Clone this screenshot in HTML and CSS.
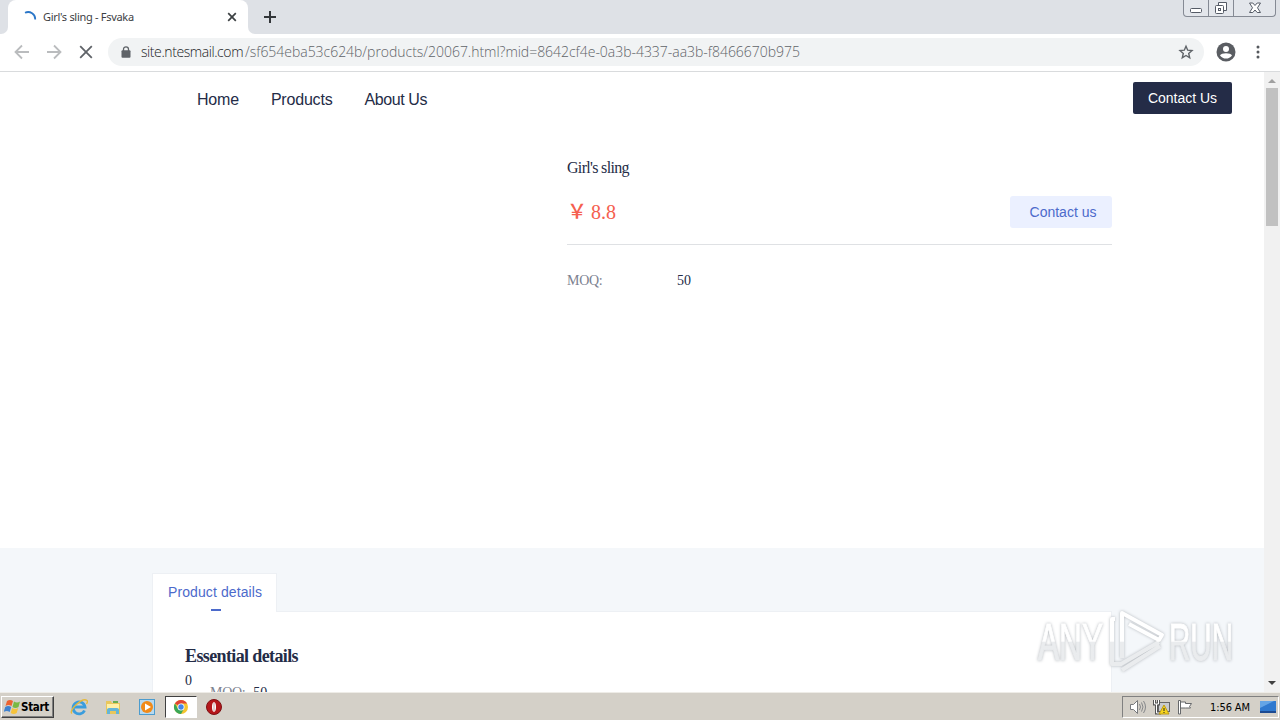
FILE: index.html
```html
<!DOCTYPE html>
<html lang="en">
<head>
  <meta charset="UTF-8">
  <meta name="viewport" content="width=device-width, initial-scale=1.0">
  <title>Girl's sling - Fsvaka</title>
  <link rel="stylesheet" href="styles.css">
</head>
<body>
  <div class="tab-strip">
    <div class="strip-edge"></div>
    <div class="tab">
      <svg class="spinner" width="16" height="16" viewBox="0 0 16 16"><path d="M3 1.700C8-.5 13.500 3 13.200 8.500" fill="none" stroke="#2a76c8" stroke-width="1.800"/></svg>
      <span class="tab-title">Girl's sling - Fsvaka</span>
      <svg class="tab-close" width="10" height="10" viewBox="0 0 10 10"><path d="M1.200 1.200l7.600 7.600M8.800 1.200L1.200 8.800" stroke="#3c4043" stroke-width="1.700"/></svg>
    </div>
    <div class="strip-rest">
      <svg class="new-tab" width="12" height="12" viewBox="0 0 12 12"><path d="M6 0v12M0 6h12" stroke="#33363a" stroke-width="2"/></svg>
      <div class="window-buttons">
        <div class="win-btn"><svg width="14" height="16" viewBox="0 0 14 16"><rect x="1.500" y="8.500" width="11" height="4" rx="1" fill="#fff" stroke="#555b66"/></svg></div>
        <div class="win-btn"><svg width="14" height="16" viewBox="0 0 14 16"><path d="M4.500 5V2.500h8v8H10" fill="#fff" stroke="#555b66"/><rect x="1.500" y="5.500" width="8" height="8" rx="1" fill="#fff" stroke="#555b66"/><rect x="4.500" y="8.500" width="2" height="2" fill="none" stroke="#555b66"/></svg></div>
        <div class="win-btn win-close"><svg width="14" height="16" viewBox="0 0 14 16"><path d="M1.500 3h3.300L7 5.500 9.200 3h3.300L9.500 7.800l3 4.700H9.200L7 10l-2.200 2.500H1.500l3-4.700z" fill="#fff" stroke="#555b66"/></svg></div>
      </div>
    </div>
  </div>

  <div class="toolbar">
    <svg width="16" height="16" viewBox="0 0 16 16"><path d="M15 8H2M8 1.500L1.500 8 8 14.500" fill="none" stroke="#babcbe" stroke-width="1.800"/></svg>
    <svg width="16" height="16" viewBox="0 0 16 16"><path d="M1 8h13M8 1.500L14.500 8 8 14.500" fill="none" stroke="#babcbe" stroke-width="1.800"/></svg>
    <svg width="16" height="16" viewBox="0 0 16 16"><path d="M2.200 2.200l11.600 11.600M13.800 2.200L2.200 13.800" stroke="#5f6368" stroke-width="1.800"/></svg>
    <div class="address-bar">
      <svg class="lock" width="10" height="12" viewBox="0 0 10 12"><path d="M2.500 5V3.300a2.500 2.500 0 0 1 5 0V5" fill="none" stroke="#5f6368" stroke-width="1.300"/><rect x=".5" y="4.300" width="9" height="7.400" rx="1" fill="#5f6368"/></svg>
      <span class="url"><span class="host">site.ntesmail.com</span><span class="path">/sf654eba53c624b/products/20067.html?mid=8642cf4e-0a3b-4337-aa3b-f8466670b975</span></span>
      <svg class="star" width="16" height="16" viewBox="0 0 16 16"><path d="M8 2.200l1.700 4 4.300.4-3.300 2.900 1 4.300L8 11.500l-3.700 2.300 1-4.300L2 6.600l4.300-.4z" fill="none" stroke="#5f6368" stroke-width="1.400"/></svg>
    </div>
    <svg class="avatar" width="20" height="20" viewBox="0 0 20 20"><circle cx="10" cy="10" r="9.500" fill="#5a5d62"/><circle cx="10" cy="7" r="3" fill="#fff"/><path d="M4 13.500c1.200-3.100 10.800-3.100 12 0-2.800 4.100-9.200 4.100-12 0z" fill="#fff"/></svg>
    <svg class="menu" width="4" height="16" viewBox="0 0 4 16"><g fill="#55585d"><circle cx="2" cy="3" r="1.500"/><circle cx="2" cy="8" r="1.500"/><circle cx="2" cy="13" r="1.500"/></g></svg>
  </div>

  <div class="viewport">
    <div class="page">
      <header class="header">
        <nav class="nav">
          <a>Home</a>
          <a>Products</a>
          <a>About Us</a>
        </nav>
        <button class="header-contact">Contact Us</button>
      </header>
      <section class="product">
        <div class="product-info">
          <h1>Girl's sling</h1>
          <div class="price-row">
            <span class="price"><span class="yen">￥</span>8.8</span>
            <button class="product-contact">Contact us</button>
          </div>
          <div class="attr">
            <span class="attr-name">MOQ:</span>
            <span class="attr-value">50</span>
          </div>
        </div>
      </section>
      <section class="details">
        <div class="details-tab">Product details</div>
        <div class="details-body">
          <h2>Essential details</h2>
          <div class="zero">0</div>
          <div class="detail-attr"><span class="attr-name">MOQ:</span><span>50</span></div>
        </div>
      </section>
    </div>
    <div class="scrollbar">
      <svg width="16" height="16" viewBox="0 0 16 16"><path d="M4 11l4-4 4 4z" fill="#a0a0a0"/></svg>
      <div class="thumb"></div>
      <svg class="scroll-down" width="16" height="16" viewBox="0 0 16 16"><path d="M4 5l4 4 4-4z" fill="#404040"/></svg>
    </div>
    <svg class="watermark" width="210" height="76" viewBox="0 0 210 76">
      <defs>
        <linearGradient id="fade" gradientUnits="userSpaceOnUse" x1="0" y1="0" x2="0" y2="72">
          <stop offset=".49" stop-color="#fff"/>
          <stop offset=".5" stop-color="#eaecee"/>
        </linearGradient>
      </defs>
      <g class="mark">
        <text x="7" y="54" textLength="65" lengthAdjust="spacingAndGlyphs">ANY</text>
        <path d="M84 13h-3v45h9l38-22M91 52V7l40 22-3 5-30-16M91 64l38-24" fill="none" stroke="url(#fade)" stroke-width="4" stroke-linejoin="round"/>
        <text x="138" y="54" textLength="64" lengthAdjust="spacingAndGlyphs">RUN</text>
      </g>
    </svg>
  </div>

  <div class="taskbar">
    <div class="start">
      <svg width="17" height="16" viewBox="0 0 17 16"><path d="M3 2q3-2 6 0L7.500 7q-3-2-6 0z" fill="#ed6330"/><path d="M10 2.500q3 2 6 0L14.500 8q-3 2-6 0z" fill="#79b943"/><path d="M1.200 8q3-2 6 0l-1.500 5q-3-2-6 0z" fill="#3f82cf"/><path d="M8.200 9q3 2 6 0l-1.500 5q-3 2-6 0z" fill="#f6c33b"/></svg>
      <span>Start</span>
    </div>
    <div class="launch">
      <svg width="18" height="18" viewBox="0 0 18 18"><path d="M14.500 12.500A6 6 0 1 1 15 9H4" fill="none" stroke="#3a9ddd" stroke-width="2.800"/><path d="M2 15.500C-2 13 12-1 17 2.500q1 1-.5 3.500" fill="none" stroke="#e5b93c" stroke-width="1.400"/></svg>
      <svg width="18" height="18" viewBox="0 0 18 18"><path d="M2 3h5l1 2h8v11H2z" fill="#e9c75c"/><path d="M3 6h12v5H3z" fill="#fff0a7"/><path d="M3 16v-4q0-2 2-2h8q2 0 2 2v4h-3v-3H6v3z" fill="#64b5d8"/><path d="M9 3h5v2H9z" fill="#69ad52"/></svg>
      <svg width="18" height="18" viewBox="0 0 18 18"><rect x="1.500" y="1.500" width="15" height="15" fill="#b7d9ef" stroke="#4c9cce"/><circle cx="9" cy="9" r="6" fill="#f18a18"/><path d="M7 5.500l6 3.500-6 3.500z" fill="#fff"/></svg>
    </div>
    <div class="active-app">
      <svg width="16" height="16" viewBox="0 0 16 16"><circle cx="8" cy="8" r="7" fill="#f4c42f"/><path d="M8 8L1.900 4.500A7 7 0 0 1 14.100 4.500H8z" fill="#e04435"/><path d="M1.900 4.500A7 7 0 0 0 8 15l3-5.300L8 8 5 9.700z" fill="#3aa757"/><circle cx="8" cy="8" r="3.500" fill="#fff"/><circle cx="8" cy="8" r="2.700" fill="#4285e8"/></svg>
    </div>
    <svg class="opera" width="16" height="16" viewBox="0 0 16 16"><circle cx="8" cy="8" r="7.500" fill="#b5171b"/><circle cx="8" cy="8" r="7.500" fill="none" stroke="#7d1014"/><ellipse cx="8" cy="8" rx="2" ry="4.800" fill="#fff"/><path d="M8 4v8" stroke="#c9a0a0"/></svg>
    <div class="tray">
      <svg width="18" height="16" viewBox="0 0 18 16"><path d="M1.500 5.500h3l4-4v13l-4-4h-3z" fill="#fff" stroke="#77797c"/><path d="M10.500 5q2 3 0 6M12.500 3.500q3 4.500 0 9M14.500 2q4 6 0 12" fill="none" stroke="#85878a"/></svg>
      <svg width="18" height="16" viewBox="0 0 18 16"><rect x="5.500" y="3.500" width="11" height="9" fill="#c8cacd" stroke="#666"/><path d="M1.500 1v4h4V1M3.500 5v9H8" fill="none" stroke="#555" stroke-width="3"/><path d="M1.500 1v4h4V1M3.500 5v9H8" fill="none" stroke="#fff"/><path d="M11 6l5 9H6z" fill="#f7d51d" stroke="#bd9a14"/><path d="M11 9v3M11 13v1" stroke="#222"/></svg>
      <svg width="18" height="16" viewBox="0 0 18 16"><path d="M1.500 15V1.500h2V15zM3.500 3h5v1.500h6l-2 3 1 1.500h-5V9h-5" fill="#fff" stroke="#66686b"/></svg>
      <span class="clock">1:56 AM</span>
      <svg class="desktop" width="16" height="14" viewBox="0 0 16 14"><path d="M0 1h16v10H0z" fill="#2f79cf"/><path d="M0 1h14L0 8z" fill="#64a5e6"/><path d="M0 11h16v2H0z" fill="#1c4a91"/></svg>
    </div>
  </div>
</body>
</html>
```
FILE: styles.css
```css
* {
  box-sizing: border-box;
}
body {
  margin: 0;
  width: 1280px;
  height: 720px;
  overflow: hidden;
  display: flex;
  flex-direction: column;
  background: #fff;
  font-family: "Liberation Sans", Arial, sans-serif;
}
svg {
  display: block;
  flex-shrink: 0;
}
button {
  border: none;
  padding: 0;
  font: 14px "Liberation Sans", Arial, sans-serif;
}

/* browser */
.tab-strip {
  height: 34px;
  display: flex;
  background: #fff;
}
.strip-edge {
  width: 8px;
  background: #dee1e6;
  border-bottom-right-radius: 7px;
}
.tab {
  width: 240px;
  display: flex;
  align-items: center;
  padding: 0 11px 0 14px;
  background: linear-gradient(#dee1e6, #dee1e6) top / 100% 8px no-repeat;
  position: relative;
  z-index: 0;
}
.tab::before {
  content: "";
  position: absolute;
  inset: 0;
  z-index: -1;
  background: #fff;
  border-radius: 8px 8px 0 0;
}
.spinner {
  margin-top: 3px;
}
.tab-title {
  flex: 1;
  margin-left: 5px;
  padding-bottom: 1px;
  font: 11px "Noto Sans", Tahoma, sans-serif;
  letter-spacing: -0.3px;
  color: #3c4043;
  white-space: nowrap;
}
.strip-rest {
  flex: 1;
  display: flex;
  justify-content: space-between;
  align-items: flex-start;
  padding: 0 4px 0 16px;
  background: #dee1e6;
  border-bottom-left-radius: 7px;
}
.new-tab {
  margin-top: 11px;
}
.window-buttons {
  display: flex;
  height: 17px;
  border: 1px solid #858a94;
  border-top: none;
  border-radius: 0 0 4px 4px;
  background: #e3e6eb;
}
.win-btn {
  width: 25px;
  display: flex;
  justify-content: center;
  border-right: 1px solid #858a94;
}
.win-close {
  width: 41px;
  border-right: none;
}
.toolbar {
  height: 38px;
  display: flex;
  align-items: center;
  gap: 16px;
  padding: 0 20px 2px 14px;
  border-bottom: 1px solid #d9dbdd;
}
.address-bar {
  width: 1096px;
  height: 28px;
  margin-left: -2px;
  margin-top: 1px;
  display: flex;
  align-items: center;
  padding: 0 10px 0 13px;
  border-radius: 14px;
  background: #f1f3f4;
}
.url {
  flex: 1;
  margin-left: 10px;
  padding-bottom: 2px;
  font: 300 14px "Open Sans", "Noto Sans", sans-serif;
  white-space: nowrap;
}
.host {
  display: inline-block;
  width: 104px;
  color: #202124;
  letter-spacing: -0.42px;
}
.path {
  color: #5f6368;
  letter-spacing: -0.03px;
}
.avatar {
  margin-left: -4px;
}
.menu {
  margin-left: 4px;
}

/* site */
.viewport {
  height: 620px;
  display: flex;
  position: relative;
  overflow: hidden;
}
.page {
  width: 1264px;
}
.header {
  height: 56px;
  display: flex;
  justify-content: space-between;
  align-items: flex-start;
  padding: 10px 32px 0 197px;
}
.nav {
  display: flex;
  gap: 32px;
  padding-top: 9px;
  font-size: 16px;
  line-height: 18px;
  letter-spacing: -0.2px;
  color: #242c47;
}
.nav a:last-child {
  letter-spacing: -0.4px;
}
.header-contact {
  width: 99px;
  height: 32px;
  border-radius: 2px;
  background: #242c47;
  color: #fff;
}
.product {
  height: 420px;
  padding: 32px 152px 0 567px;
  font-family: "Liberation Serif", "Times New Roman", serif;
  color: #242c47;
}
.product h1 {
  margin: 0;
  font-size: 16px;
  font-weight: 400;
  line-height: 16px;
  letter-spacing: -0.68px;
}
.price-row {
  display: flex;
  justify-content: space-between;
  align-items: center;
  height: 69px;
  padding-top: 4px;
  border-bottom: 1px solid #dfe1e4;
}
.price {
  font-size: 20px;
  line-height: 24px;
  color: #f5604f;
}
.yen {
  display: inline-block;
  width: 24px;
  font-family: "Noto Sans CJK SC", sans-serif;
  font-weight: 500;
  line-height: 20px;
}
.product-contact {
  width: 102px;
  height: 32px;
  padding-left: 4px;
  border-radius: 3px;
  background: #ebf0ff;
  color: #4c6acb;
}
.attr {
  display: flex;
  padding-top: 27px;
  font-size: 14px;
  line-height: 18px;
}
.attr-name {
  color: #7c8190;
  letter-spacing: -0.3px;
}
.attr .attr-name {
  width: 110px;
}
.details {
  height: 144px;
  padding: 25px 152px 0;
  background: #f4f7fa;
}
.details-tab {
  width: 125px;
  height: 39px;
  padding: 10px 0 0 15px;
  font-size: 14px;
  line-height: 16px;
  letter-spacing: 0.1px;
  color: #4c6acb;
  background: #fff;
  border: 1px solid #edf0f4;
  border-bottom: none;
  position: relative;
}
.details-tab::after {
  content: "";
  position: absolute;
  left: 58px;
  bottom: 1px;
  width: 10px;
  height: 2px;
  background: #4c6acb;
}
.details-body {
  height: 200px;
  margin-top: -1px;
  padding: 32px 32px;
  background: #fff;
  border: 1px solid #edf0f4;
  font: 14px/18px "Liberation Serif", "Times New Roman", serif;
  color: #242c47;
}
.details-body h2 {
  margin: 0;
  font-size: 18px;
  line-height: 24px;
  letter-spacing: -0.62px;
}
.zero {
  height: 12px;
  margin-top: 4px;
}
.detail-attr {
  display: flex;
  gap: 8px;
  padding-left: 25px;
}
.scrollbar {
  width: 16px;
  display: flex;
  flex-direction: column;
  background: #f1f1f1;
}
.thumb {
  width: 12px;
  height: 138px;
  margin-left: 2px;
  background: #c1c1c1;
}
.scroll-down {
  margin-top: auto;
}
.watermark {
  position: absolute;
  left: 1031px;
  top: 534px;
}
.mark {
  filter: drop-shadow(0 0 1.8px #b4b8bd);
}
.mark text {
  font: 400 51px "Liberation Sans", Arial, sans-serif;
  fill: url(#fade);
  stroke: url(#fade);
  stroke-width: 1px;
}

/* taskbar */
.taskbar {
  height: 28px;
  display: flex;
  align-items: center;
  padding: 1px 1px 0 1px;
  background: #d4d0c8;
  border-top: 1px solid #eeece7;
}
.start {
  width: 53px;
  height: 22px;
  display: flex;
  align-items: center;
  padding-left: 2px;
  border: 1px solid;
  border-color: #fff #404040 #404040 #fff;
  box-shadow: inset -1px -1px #808080;
  font: 700 11.5px "DejaVu Sans Condensed", Tahoma, sans-serif;
  letter-spacing: -0.3px;
}
.launch {
  display: flex;
  gap: 16px;
  margin-left: 16px;
}
.active-app {
  width: 32px;
  height: 22px;
  margin-left: 9px;
  display: flex;
  align-items: center;
  justify-content: center;
  background: #fff;
  border: 1px solid;
  border-color: #404040 #fff #fff #404040;
}
.opera {
  margin-left: 9px;
}
.tray {
  width: 157px;
  height: 22px;
  margin-left: auto;
  display: flex;
  align-items: center;
  padding-left: 6px;
  gap: 6px;
  border: 1px solid;
  border-color: #808080 #fff #fff #808080;
}
.clock {
  width: 44px;
  margin-left: 9px;
  font: 11px "DejaVu Sans Condensed", Tahoma, sans-serif;
  letter-spacing: -0.1px;
  white-space: nowrap;
}
```
